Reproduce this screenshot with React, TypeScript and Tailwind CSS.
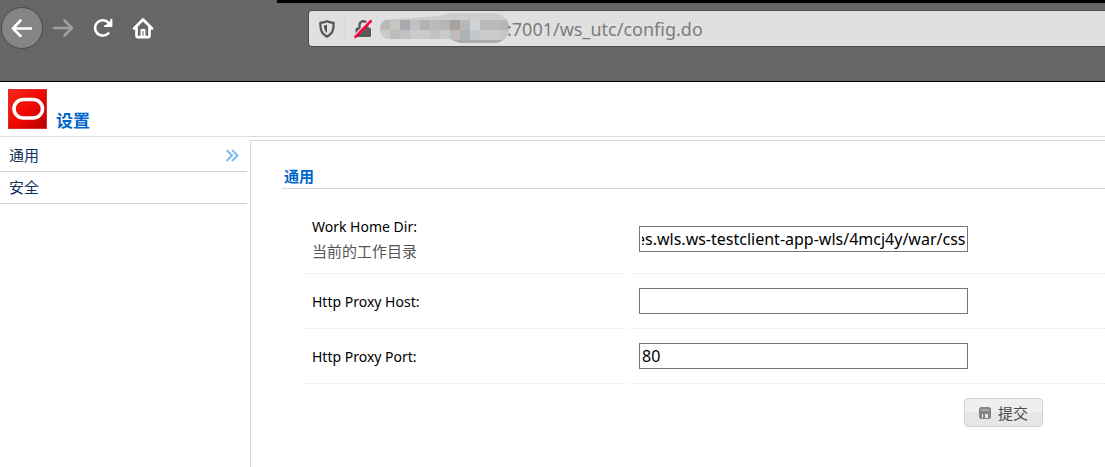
import { useEffect, useRef } from "react";
import type { ReactNode } from "react";

const CELLS: [string, string][] = [
  ["#b8b8b8", "#c8c8c8"],
  ["#c9c5bf", "#bdbdbd"],
  ["#a7a9ae", "#c1c1c2"],
  ["#bfc1c2", "#cbcbcb"],
  ["#b1b3b3", "#c9c9c9"],
  ["#b9bab9", "#c1c1c1"],
  ["#b4b7b6", "#cacaca"],
  ["#a8a29f", "#c0bbb8"],
  ["#b8b8b8", "#adb2b6"],
  ["#d0d4d6", "#c4c6c7"],
  ["#b9bbba", "#cccccc"],
  ["#b9bab9", "#cccccc"],
  ["#b5b6b6", "#c6c6c6"],
];

function MaskedHost() {
  return (
    <svg width="129" height="32" viewBox="0 0 129 32" className="shrink-0" aria-hidden="true">
      <clipPath id="host-shape">
        <path d="M11 6 L32 5 L58 3 L72 0 H114 C123 0 129 7 129 15 S123 30 114 30 H80 L70 26 H11 C4 26 0 22 0 16 S4 6 11 6Z" />
      </clipPath>
      <g clipPath="url(#host-shape)">
        <rect width="129" height="32" fill="#cdcdcd" />
        {CELLS.map(([top, bottom], i) => (
          <g key={i}>
            <rect x={i * 10} y="7" width="10" height="10" fill={top} />
            <rect x={i * 10} y="17" width="10" height="10" fill={bottom} />
          </g>
        ))}
        <rect x="70" y="27" width="59" height="5" fill="#aaa" />
      </g>
    </svg>
  );
}

function BrowserBar() {
  return (
    <header className="flex h-[82px] items-start border-b border-black bg-[#666]">
      <nav className="flex w-[277px] shrink-0 items-center pt-[7px] pl-px">
        <button aria-label="Back" className="flex size-[42px] items-center justify-center rounded-full border border-[#4b4b4b] bg-[#858585]">
          <svg width="22" height="20" viewBox="0 0 22 20" fill="none" stroke="#fff" strokeWidth="2.600" strokeLinecap="round" strokeLinejoin="round">
            <path d="M20 10.500H2M9.500 2.500 2 10.500l7.500 7.500" />
          </svg>
        </button>
        <button aria-label="Forward" className="ml-[9px] flex h-10 w-[22px] items-center justify-center">
          <svg width="22" height="20" viewBox="0 0 22 20" fill="none" stroke="#a0a0a0" strokeWidth="2.600" strokeLinecap="round" strokeLinejoin="round">
            <path d="M2 10H20M12.500 2.500 20 10l-7.500 7.500" />
          </svg>
        </button>
        <button aria-label="Reload" className="ml-[19px] flex h-10 w-5 items-center justify-center">
          <svg width="20" height="20" viewBox="0 0 20 20" fill="none" stroke="#fff" strokeWidth="2.600">
            <path d="M15.300 15.300A7.700 7.700 0 1 1 15.800 5.200" strokeLinecap="round" />
            <path d="M18.300 1.800v6.200h-6.200" strokeLinecap="round" strokeLinejoin="round" strokeWidth="2.200" />
            <path d="M18 2v6h-6z" fill="#fff" stroke="none" />
          </svg>
        </button>
        <button aria-label="Home" className="ml-[19px] flex h-10 w-[22px] items-center justify-center">
          <svg width="22" height="22" viewBox="0 0 22 22" fill="none" stroke="#fff" strokeWidth="2.700" strokeLinecap="round" strokeLinejoin="round">
            <path d="M2 11.500 11 2.500l9 9M4.500 10.500v8.500a1.200 1.200 0 0 0 1.200 1.200h10.600a1.200 1.200 0 0 0 1.200-1.200v-8.500" />
            <path d="M9.500 19.500v-6.500h3v6.500" strokeWidth="2" />
          </svg>
        </button>
      </nav>
      <div className="flex min-w-0 flex-1 flex-col">
        <div className="h-[3px] bg-black" />
        <div className="mt-[7px] ml-[31px] flex h-[37px] items-center rounded-l-sm border-y border-l border-[#4e4e4e] bg-[#e0e0e0]">
          <svg width="16" height="18" viewBox="0 0 16 18" className="ml-[10px] shrink-0" aria-hidden="true">
            <path d="M8 1.200c2.200 1 4.300 1.500 6.700 1.600 0 6.200-.6 10.700-6.700 13.900C1.900 13.500 1.300 9 1.300 2.800 3.700 2.700 5.800 2.200 8 1.200Z" fill="none" stroke="#555" strokeWidth="2.200" strokeLinejoin="round" />
            <path d="M8 4.600v8.500C5.600 11.300 5 9 4.800 5.600 6 5.500 7 5.200 8 4.600Z" fill="#555" />
          </svg>
          <div className="ml-[9px] h-6 w-px shrink-0 bg-[#dadada]" />
          <svg width="18" height="20" viewBox="0 0 18 20" className="ml-[9px] shrink-0" aria-hidden="true">
            <path d="M5.500 9V6a3.800 3.800 0 0 1 7.600 0v3" fill="none" stroke="#5a5a5a" strokeWidth="2.400" />
            <rect x="1.500" y="8.500" width="15.500" height="9.500" rx="1.500" fill="#5a5a5a" />
            <path d="M0 17.300 16 1" stroke="#e0e0e0" strokeWidth="2" />
            <path d="M1.500 17.800 16.800 2.200" stroke="#ff0039" strokeWidth="2.600" strokeLinecap="round" />
          </svg>
          <div className="ml-2 flex min-w-0 flex-1 items-center">
            <MaskedHost />
            <input
              aria-label="Address"
              defaultValue=":7001/ws_utc/config.do"
              className="-ml-0.5 min-w-0 flex-1 bg-transparent font-['Noto_Sans',sans-serif] text-[18px] leading-6 text-[#7c7c7c] outline-none"
            />
          </div>
        </div>
      </div>
    </header>
  );
}

function Logo() {
  return (
    <svg width="39" height="40" viewBox="0 0 39 40" role="img" aria-label="Oracle">
      <defs>
        <linearGradient id="logo-red" x1="0" y1="0" x2="1" y2="1">
          <stop offset="0" stopColor="#f8281c" />
          <stop offset="0.500" stopColor="#f00800" />
          <stop offset="1" stopColor="#b80000" />
        </linearGradient>
      </defs>
      <rect x="0.500" y="0.500" width="38" height="39" fill="url(#logo-red)" stroke="#d23030" />
      <rect x="6" y="10.500" width="28.500" height="18.500" rx="9.250" fill="none" stroke="#fff" strokeWidth="3.600" />
    </svg>
  );
}

function Sidebar() {
  return (
    <nav className="w-[247px] shrink-0 pt-[3px] text-[15px] leading-[31px] text-[#10305c]">
      <a href="#general" className="flex items-center justify-between border-b border-[#d2d2d2] pr-2 pl-[9px]">
        通用
        <svg width="14" height="14" viewBox="0 0 14 14" fill="none" stroke="#7cbcf0" strokeWidth="2" aria-hidden="true">
          <path d="M1.500 1 7 6.500 1.500 12M7 1l5.500 5.500L7 12" />
        </svg>
      </a>
      <a href="#security" className="block border-b border-[#d2d2d2] pl-[9px]">
        安全
      </a>
    </nav>
  );
}

interface RowProps {
  id: string;
  label: string;
  hint?: string;
  children: ReactNode;
}

function Row({ id, label, hint, children }: RowProps) {
  return (
    <div className="flex min-h-[55px] gap-[5px]">
      <div className="flex w-[321px] shrink-0 flex-col justify-center border-b border-dotted border-[#e8e8e8] px-[10px] py-[9px] leading-[25px]">
        <label htmlFor={id} className="text-black">{label}</label>
        {hint && <span className="text-[15px] text-[#555]">{hint}</span>}
      </div>
      <div className="flex min-w-0 flex-1 items-center border-b border-dotted border-[#e8e8e8] px-[11px]">{children}</div>
    </div>
  );
}

const FIELD =
  "h-[26px] w-[329px] border border-[#767676] bg-white px-[2px] font-['Noto_Sans',sans-serif] text-[16px] leading-6 text-black outline-none";

export default function App() {
  const dirRef = useRef<HTMLInputElement>(null);

  useEffect(() => {
    const field = dirRef.current;
    if (field) field.scrollLeft = field.scrollWidth;
  }, []);

  return (
    <div className="flex min-h-screen flex-col bg-white font-['Noto_Sans','Noto_Sans_CJK_SC',sans-serif] text-[14px]">
      <BrowserBar />
      <div className="flex items-end gap-[9px] border-b border-[#ddd] pt-[7px] pb-[7px] pl-2">
        <Logo />
        <h1 className="text-[17px] leading-4 font-bold text-[#0066cc]">设置</h1>
      </div>
      <div className="flex flex-1">
        <Sidebar />
        <main className="mt-[3px] ml-[3px] min-w-0 flex-1 border-t border-l border-[#d8d8d8] pt-[23px] pl-[31px]">
          <h2 className="border-b border-[#d8d8d8] pl-[2px] text-[15px] leading-6 font-bold text-[#0066cc]">通用</h2>
          <form className="pt-4 pl-5" onSubmit={(e) => e.preventDefault()}>
            <Row id="work-dir" label="Work Home Dir:" hint="当前的工作目录">
              <input ref={dirRef} id="work-dir" className={FIELD} defaultValue="es.wls.ws-testclient-app-wls/4mcj4y/war/css" />
            </Row>
            <Row id="proxy-host" label="Http Proxy Host:">
              <input id="proxy-host" className={FIELD} />
            </Row>
            <Row id="proxy-port" label="Http Proxy Port:">
              <input id="proxy-port" className={FIELD} defaultValue="80" />
            </Row>
            <div className="flex justify-end pt-[14px] pr-[62px]">
              <button
                type="submit"
                className="flex h-[29px] items-center gap-[7px] rounded-[4px] border border-[#d2d2d2] bg-linear-to-b from-[#efefef] from-50% to-[#e6e6e6] to-50% px-[14px] text-[15px] leading-6 text-[#4a4a4a]"
              >
                <svg width="12" height="12" viewBox="0 0 12 12" aria-hidden="true">
                  <rect width="12" height="12" rx="2.500" fill="#858585" />
                  <rect x="2" y="2" width="8" height="2" fill="#a9a9a9" />
                  <rect x="3" y="7" width="6" height="4" fill="#e8e8e8" />
                  <rect x="4" y="7" width="2" height="4" fill="#858585" />
                </svg>
                提交
              </button>
            </div>
          </form>
        </main>
      </div>
    </div>
  );
}
